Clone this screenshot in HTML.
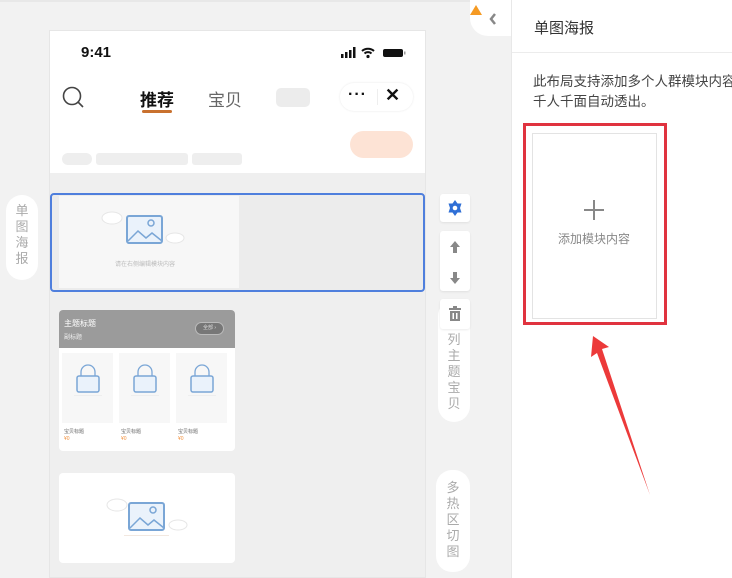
<!DOCTYPE html>
<html><head><meta charset="utf-8"><style>
*{margin:0;padding:0;box-sizing:border-box}
body{width:732px;height:578px;overflow:hidden;background:#f2f2f2;font-family:"Liberation Sans","Noto Sans CJK SC",sans-serif;position:relative}
.a{position:absolute}
.pill{position:absolute;background:#fff;border-radius:16px;color:#aaa;font-size:13px;line-height:16px;text-align:center}
.btn{position:absolute;background:#fff;border-radius:3px;box-shadow:0 1px 2px rgba(0,0,0,.08)}
.sk{position:absolute;background:#eee;border-radius:6px}
</style></head><body>
<div class="a" style="left:0;top:0;width:512px;height:2px;background:#e8e8e8"></div>
<!-- phone -->
<div class="a" style="left:49px;top:30px;width:377px;height:548px;background:#efefef;border:1px solid #e6e6e6"></div>
<div class="a" style="left:50px;top:31px;width:375px;height:142px;background:#fff"></div>
<div class="a" style="left:81px;top:44px;font-size:15px;font-weight:bold;color:#111">9:41</div>
<svg class="a" style="left:338px;top:46px" width="70" height="14"><rect x="3" y="8" width="2.5" height="4" fill="#111"/><rect x="7" y="6" width="2.5" height="6" fill="#111"/><rect x="11" y="4" width="2.5" height="8" fill="#111"/><rect x="15" y="1" width="2.5" height="11" fill="#111"/><path d="M24 5a9 9 0 0 1 12 0M26.5 7.5a5 5 0 0 1 7 0" stroke="#111" stroke-width="2" fill="none"/><circle cx="30" cy="10.5" r="1.6" fill="#111"/><rect x="45" y="3" width="20" height="8" rx="2" fill="#111"/><rect x="66" y="5.5" width="1.5" height="3" fill="#999"/></svg>
<svg class="a" style="left:62px;top:86px" width="24" height="24"><circle cx="10" cy="10" r="8.5" stroke="#444" stroke-width="1.6" fill="none"/><path d="M16 16l5 5" stroke="#444" stroke-width="1.6"/></svg>
<div class="a" style="left:140px;top:86px;font-size:17px;font-weight:bold;color:#111">推荐</div>
<div class="a" style="left:142px;top:110px;width:30px;height:3px;background:#c9712f;border-radius:2px"></div>
<div class="a" style="left:208px;top:86px;font-size:17px;color:#666">宝贝</div>
<div class="a" style="left:276px;top:88px;width:34px;height:19px;background:#ececec;border-radius:5px"></div>
<div class="a" style="left:340px;top:83px;width:73px;height:28px;border-radius:14px;background:#fff;box-shadow:0 0 2px rgba(0,0,0,.1)"></div>
<div class="a" style="left:348px;top:86px;font-size:16px;font-weight:bold;color:#111;letter-spacing:1px">···</div>
<div class="a" style="left:377px;top:89px;width:1px;height:16px;background:#eee"></div>
<div class="a" style="left:385px;top:85px;font-size:18px;font-weight:bold;color:#111">✕</div>
<div class="a" style="left:350px;top:131px;width:63px;height:27px;background:#fde3d5;border-radius:14px"></div>
<div class="sk" style="left:62px;top:153px;width:30px;height:12px"></div>
<div class="sk" style="left:96px;top:153px;width:92px;height:12px;border-radius:3px"></div>
<div class="sk" style="left:192px;top:153px;width:50px;height:12px;border-radius:3px"></div>
<!-- selected -->
<div class="a" style="left:50px;top:193px;width:375px;height:99px;border:2px solid #4f7fdd;border-radius:4px;background:#ececec"></div>
<div class="a" style="left:59px;top:196px;width:180px;height:92px;background:#f7f7f7"></div>
<svg class="a" style="left:100px;top:208px" width="90" height="40"><ellipse cx="12" cy="10" rx="10" ry="6" fill="#fff" stroke="#e6e6e6"/><ellipse cx="75" cy="30" rx="9" ry="5" fill="#fff" stroke="#e6e6e6"/><rect x="27" y="8" width="35" height="27" rx="2" fill="#eaf2fb" stroke="#7aa6d6" stroke-width="2"/><circle cx="51" cy="15" r="3" fill="none" stroke="#7aa6d6" stroke-width="1.5"/><path d="M28 33l10-10 8 7 6-5 10 8" fill="none" stroke="#7aa6d6" stroke-width="1.5"/></svg>
<div class="a" style="left:115px;top:259px;font-size:6px;color:#bbb">请在右侧编辑模块内容</div>
<!-- card 2 -->
<div class="a" style="left:59px;top:310px;width:176px;height:141px;background:#fff;border-radius:4px;overflow:hidden">
<div style="height:38px;background:#9b9b9b;position:relative"><div class="a" style="left:5px;top:8px;font-size:8px;color:#fff">主题标题</div><div class="a" style="left:5px;top:22px;font-size:6px;color:#eee">副标题</div><div class="a" style="left:136px;top:12px;width:29px;height:13px;border-radius:7px;background:#777;border:1px solid #bbb;font-size:5px;color:#ddd;text-align:center;line-height:11px">全部 ›</div></div>
</div>
<svg class="a" style="left:62px;top:353px" width="170" height="90">
<g id="it"><rect x="0" y="0" width="51" height="70" fill="#f7f7f7"/><rect x="15" y="23" width="22" height="16" rx="2" fill="#eaf2fb" stroke="#7aa6d6" stroke-width="1.5"/><path d="M19 23v-4a7 7 0 0 1 14 0v4" fill="none" stroke="#7aa6d6" stroke-width="1.3"/><rect x="12" y="42" width="28" height="1" fill="#eee"/><text x="2" y="80" font-size="5" fill="#666">宝贝标题</text><text x="2" y="87" font-size="5" fill="#f29240">¥0</text></g>
<use href="#it" x="57"/><use href="#it" x="114"/></svg>
<!-- card 3 -->
<div class="a" style="left:59px;top:473px;width:176px;height:90px;background:#fff;border-radius:4px"></div>
<svg class="a" style="left:102px;top:495px" width="90" height="45"><ellipse cx="15" cy="10" rx="10" ry="6" fill="#fff" stroke="#e6e6e6"/><ellipse cx="76" cy="30" rx="9" ry="5" fill="#fff" stroke="#e6e6e6"/><rect x="27" y="8" width="35" height="27" rx="2" fill="#eaf2fb" stroke="#7aa6d6" stroke-width="2"/><circle cx="51" cy="15" r="3" fill="none" stroke="#7aa6d6" stroke-width="1.5"/><path d="M28 33l10-10 8 7 6-5 10 8" fill="none" stroke="#7aa6d6" stroke-width="1.5"/><rect x="22" y="40" width="45" height="1" fill="#f2e8e0"/></svg>
<!-- left pill -->
<div class="pill" style="left:6px;top:195px;width:32px;height:85px;padding-top:8px">单<br>图<br>海<br>报</div>
<!-- right tools -->
<div class="pill" style="left:438px;top:300px;width:32px;height:122px;padding-top:32px">列<br>主<br>题<br>宝<br>贝</div>
<div class="pill" style="left:436px;top:470px;width:34px;height:102px;padding-top:10px">多<br>热<br>区<br>切<br>图</div>
<div class="btn" style="left:440px;top:194px;width:30px;height:28px"><svg width="30" height="28"><path d="M15 6l2.5 3.5h4l-1.5 4.5 1.5 4.5h-4L15 22l-2.5-3.5h-4l1.5-4.5-1.5-4.5h4z" fill="#2f6fd6"/><circle cx="15" cy="14" r="2.3" fill="#fff"/></svg></div>
<div class="btn" style="left:440px;top:231px;width:30px;height:60px"><svg width="30" height="60"><path d="M15 10l-5 6h3v6h4v-6h3z" fill="#888"/><path d="M15 53l-5-6h3v-6h4v6h3z" fill="#888"/></svg></div>
<div class="btn" style="left:440px;top:299px;width:30px;height:30px"><svg width="30" height="30"><rect x="9" y="9" width="12" height="2" fill="#888"/><rect x="13" y="7" width="4" height="2" fill="#888"/><rect x="10" y="12" width="10" height="10" fill="#888"/><rect x="12.5" y="14" width="1.5" height="6" fill="#fff"/><rect x="16" y="14" width="1.5" height="6" fill="#fff"/></svg></div>
<!-- toggle -->
<div class="a" style="left:470px;top:0;width:42px;height:36px;background:#fff;border-radius:0 0 0 18px"></div>
<svg class="a" style="left:468px;top:4px" width="40" height="26"><path d="M8 1l6 10H2z" fill="#f59a23"/><path d="M27 10l-4 5 4 5" stroke="#888" stroke-width="2.5" fill="none"/></svg>
<!-- right panel -->
<div class="a" style="left:511px;top:0;width:221px;height:578px;background:#fff;border-left:1px solid #e8e8e8"></div>
<div class="a" style="left:512px;top:52px;width:220px;height:1px;background:#ececec"></div>
<div class="a" style="left:534px;top:17px;font-size:15px;color:#333">单图海报</div>
<div class="a" style="left:533px;top:72px;font-size:13.5px;color:#444;line-height:20px;white-space:nowrap">此布局支持添加多个人群模块内容<br>千人千面自动透出。</div>
<div class="a" style="left:523px;top:123px;width:144px;height:202px;border:3px solid #e0333f"></div>
<div class="a" style="left:532px;top:133px;width:125px;height:186px;border:1px solid #e3e3e3"></div>
<div class="a" style="left:584px;top:209px;width:20px;height:2px;background:#888"></div>
<div class="a" style="left:593px;top:200px;width:2px;height:20px;background:#888"></div>
<div class="a" style="left:558px;top:230px;font-size:12px;color:#888">添加模块内容</div>
<svg class="a" style="left:580px;top:330px" width="80" height="165"><path d="M13 6L11 27l6-4 53 142-48-146 7-2z" fill="#ec3a3a"/></svg>
</body></html>
